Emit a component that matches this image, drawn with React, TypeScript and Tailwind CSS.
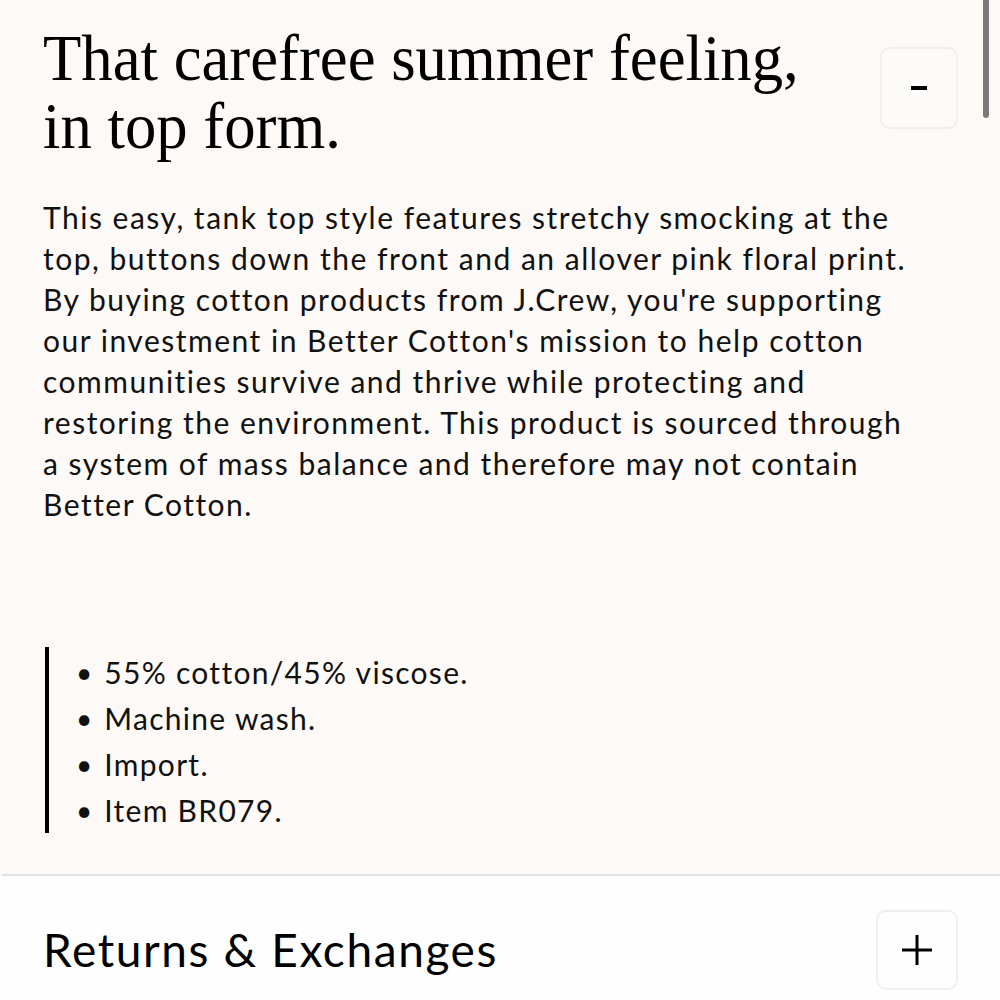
import React from 'react';

const bullets = ['55% cotton/45% viscose.', 'Machine wash.', 'Import.', 'Item BR079.'];

function MinusIcon() {
  return (
    <svg width="18" height="18" viewBox="0 0 18 18">
      <rect x="1" y="7" width="16" height="4" fill="#000" />
    </svg>
  );
}

function PlusIcon() {
  return (
    <svg width="32" height="32" viewBox="0 0 32 32">
      <path d="M16 1v30M1 16h30" stroke="#000" strokeWidth="3" fill="none" />
    </svg>
  );
}

export default function App() {
  return (
    <div className="relative w-[1000px] h-[1000px] overflow-hidden bg-[#fefefe]">
      {/* Description panel */}
      <section className="bg-[#fcf9f6] pl-[43px] pr-[42px] pt-[24px] h-[874px]">
        <div className="flex items-start justify-between">
          <h1 className="font-['Liberation_Serif',serif] text-[65px] leading-[68px] text-black origin-left scale-x-[0.965] whitespace-nowrap">
            That carefree summer feeling,
            <br />
            in top form.
          </h1>
          <button className="mt-[23px] w-[78px] h-[82px] shrink-0 rounded-[10px] border-2 border-[#f1efec] bg-[#fdfbf9] flex items-center justify-center">
            <MinusIcon />
          </button>
        </div>

        <p className="mt-[37px] font-['Lato',sans-serif] text-[30px] leading-[41px] tracking-[1.5px] text-[#111] max-w-[880px]">
          This easy, tank top style features stretchy smocking at the top, buttons down the front and an allover pink
          floral print. By buying cotton products from J.Crew, you're supporting our investment in Better Cotton's
          mission to help cotton communities survive and thrive while protecting and restoring the environment. This
          product is sourced through a system of mass balance and therefore may not contain Better Cotton.
        </p>

        <ul className="mt-[122px] ml-[2px] border-l-[4px] border-black pl-[27px] pt-[2px] font-['Lato',sans-serif] text-[30px] leading-[46px] tracking-[1.3px] text-[#111]">
          {bullets.map((b) => (
            <li key={b} className="flex items-center gap-[12px]">
              <span className="text-[28px] leading-none tracking-normal">•</span>
              <span>{b}</span>
            </li>
          ))}
        </ul>
      </section>

      {/* Divider */}
      <div className="h-[2px] bg-[#e4e2e0] ml-[2px]" />

      {/* Returns row */}
      <section className="flex items-center justify-between pl-[43px] pr-[42px] pt-[34px]">
        <h2 className="font-['Lato',sans-serif] text-[46px] leading-none tracking-[1.6px] text-black">
          Returns &amp; Exchanges
        </h2>
        <button className="w-[82px] h-[80px] shrink-0 rounded-[10px] border-2 border-[#efefef] bg-[#fefefe] flex items-center justify-center">
          <PlusIcon />
        </button>
      </section>

      {/* Scrollbar thumb */}
      <div className="absolute right-[11px] top-0 w-[6px] h-[118px] rounded-b-full bg-[#7b7b7b]" />
    </div>
  );
}
